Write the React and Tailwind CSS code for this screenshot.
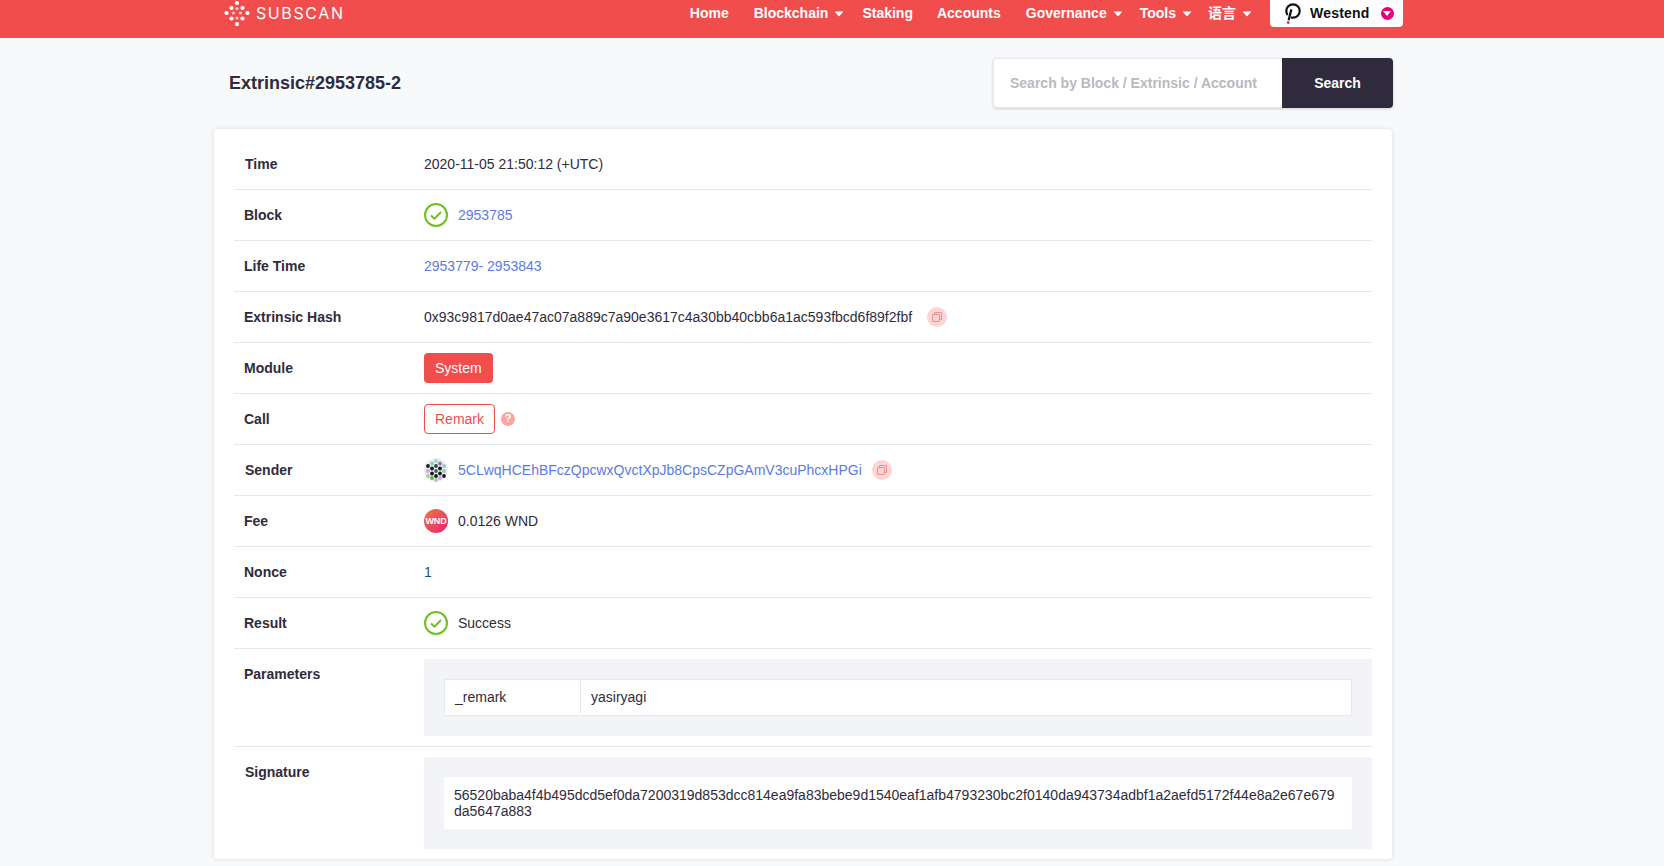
import React from "react";

const Caret = () => (
  <svg width="10" height="6" viewBox="0 0 10 6" className="ml-[6px] mt-px">
    <path d="M0.5 0.5h9L5 5.5z" fill="#fff" />
  </svg>
);

const Logo = () => {
  // diamond made of dots, rotated grid
  const dots = [
    [13, 3], [7.5, 8], [18.5, 8], [2.5, 13], [23.5, 13], [7.5, 18.5], [18.5, 18.5], [13, 24],
    [13, 8.5], [9.5, 13], [16.5, 13], [13, 18],
  ];
  return (
    <svg width="26" height="26" viewBox="0 0 26 26">
      {dots.map(([x, y], i) => (
        <circle key={i} cx={x} cy={y} r={i > 7 ? 1.6 : 2.1} fill="#fff" fillOpacity={i > 7 ? 0.7 : 1} />
      ))}
    </svg>
  );
};

const CheckIcon = () => (
  <svg width="24" height="24" viewBox="0 0 24 24" className="mr-[10px] shrink-0">
    <circle cx="12" cy="12" r="11" fill="none" stroke="#6fbf1f" strokeWidth="2" />
    <path d="M7 12.5l3.5 3.2L17 9" fill="none" stroke="#6fbf1f" strokeWidth="2" />
  </svg>
);

const CopyIcon = ({ className = "ml-[14px]" }) => (
  <span className={`flex h-5 w-5 items-center justify-center rounded-full bg-[#fdd5d5] ${className}`}>
    <svg width="10" height="10" viewBox="0 0 10 10" fill="none" stroke="#f08f8f" strokeWidth="1">
      <rect x="0.5" y="2.5" width="7" height="7" rx="0.5" />
      <path d="M2.5 2.5v-2h7v7h-2" />
    </svg>
  </span>
);

const Identicon = () => {
  const cells = [
    [12, 3, "#a8d5c5"],
    [8, 5.5, "#8fc9c4"], [16, 5.5, "#9b6fb5"],
    [4, 8, "#1f1d18"], [12, 8, "#1f4f45"], [20, 8, "#8fc9c4"],
    [8, 10.5, "#1a201c"], [16, 10.5, "#1a1a1a"],
    [4, 13, "#c9a8d8"], [12, 13, "#2f6b5e"], [20, 13, "#8fc9c4"],
    [8, 15.5, "#1a1a16"], [16, 15.5, "#1a201c"],
    [4, 18, "#a5d3a0"], [12, 18, "#1a1a1a"], [20, 18, "#1f1d18"],
    [8, 20, "#6aa84f"], [16, 20, "#c9a8d8"],
    [12, 22, "#a5d3a0"],
  ];
  return (
    <svg width="24" height="24" viewBox="0 0 24 24" className="mr-[10px] shrink-0">
      <circle cx="12" cy="12" r="12" fill="#eeeeee" />
      {cells.map(([x, y, c], i) => (
        <circle key={i} cx={x} cy={y} r="1.9" fill={c} />
      ))}
    </svg>
  );
};

const Row = ({ label, children, labelClass = "" }) => (
  <div className="flex h-[51px] items-center border-b border-[#e7e7f0]">
    <div className={`w-[190px] shrink-0 pl-[10px] text-sm font-bold text-[#302b3c] ${labelClass}`}>{label}</div>
    <div className="flex items-center text-sm text-[#302b3c]">{children}</div>
  </div>
);

const NavItem = ({ children, caret, className = "" }) => (
  <div className={`flex items-center text-sm font-bold text-white ${className}`}>
    {children}
    {caret && <Caret />}
  </div>
);

export default function App() {
  return (
    <div className="min-h-screen bg-[#f8f9fb] font-['Liberation_Sans','Noto_Sans_CJK_SC',sans-serif] text-[#302b3c]">
      {/* ===== Nav ===== */}
      <div className="flex h-[38px] items-start bg-[#f24d4d] pl-[224px]">
        <div className="flex h-[26px] items-center">
          <Logo />
          <span className="ml-[6px] font-['Inter',sans-serif] text-base font-normal tracking-[1.6px] text-white">SUBSCAN</span>
        </div>
        <div className="ml-auto flex h-[26px] items-center pr-[261px]">
          <NavItem>Home</NavItem>
          <NavItem caret className="ml-[25px]">Blockchain</NavItem>
          <NavItem className="ml-[18px]">Staking</NavItem>
          <NavItem className="ml-[24px]">Accounts</NavItem>
          <NavItem caret className="ml-[25px]">Governance</NavItem>
          <NavItem caret className="ml-[17px]">Tools</NavItem>
          <NavItem caret className="ml-[16px]">语言</NavItem>
          <div className="ml-[18px] flex h-[27px] w-[133px] items-center rounded-b-sm bg-white pl-[15px]">
            <svg width="16" height="21" viewBox="0 0 16 21" fill="none">
              <path d="M2.6 12.2C1.8 11 1.3 9.6 1.3 8 1.3 4.4 4.2 1.3 8 1.3s6.7 3 6.7 6.7-3 6.7-6.7 6.7c-.7 0-1.4-.1-2-.3" stroke="#111" strokeWidth="2.2" />
              <path d="M6.4 6.4L3.6 17.2" stroke="#111" strokeWidth="2.2" />
              <circle cx="3.2" cy="19.6" r="1.3" fill="#e6007a" />
            </svg>
            <span className="ml-[9px] text-sm font-bold tracking-[0.2px] text-[#111]">Westend</span>
            <span className="ml-[11px] flex h-[13px] w-[13px] items-center justify-center rounded-full bg-[#e6007a]">
              <svg width="8" height="5" viewBox="0 0 8 5">
                <path d="M0 0h8L4 5z" fill="#fff" />
              </svg>
            </span>
          </div>
        </div>
      </div>

      <div className="ml-[214px] w-[1178px]">
        {/* ===== Heading ===== */}
        <div className="mb-[2px] flex h-[89px] items-center justify-between pl-[15px]">
          <h1 className="text-lg font-bold text-[#302b3c]">Extrinsic#2953785-2</h1>
          <div className="-mr-px flex h-[50px] w-[400px] rounded shadow-[0_1px_3px_rgba(48,43,60,0.2)]">
            <div className="flex flex-1 items-center rounded-l border border-r-0 border-[#e7e7f0] bg-white pl-[16px] text-sm font-bold text-[#b9b9bf]">
              Search by Block / Extrinsic / Account
            </div>
            <div className="flex w-[111px] items-center justify-center rounded-r bg-[#302b3c] text-sm font-bold text-white">
              Search
            </div>
          </div>
        </div>

        {/* ===== Card ===== */}
        <div className="rounded bg-white px-5 pt-[10px] pb-[10px] shadow-[0_0_4px_rgba(48,43,60,0.15)]">
          <Row label="Time" labelClass="pl-[11px]">2020-11-05 21:50:12 (+UTC)</Row>
          <Row label="Block">
            <CheckIcon />
            <span className="text-[#5b7be8]">2953785</span>
          </Row>
          <Row label="Life Time">
            <span className="text-[#5b7be8]">2953779- 2953843</span>
          </Row>
          <Row label="Extrinsic Hash">
            0x93c9817d0ae47ac07a889c7a90e3617c4a30bb40cbb6a1ac593fbcd6f89f2fbf
            <CopyIcon className="ml-[15px]" />
          </Row>
          <Row label="Module">
            <span className="flex h-[30px] items-center rounded bg-[#f24d4d] px-[11px] text-white">System</span>
          </Row>
          <Row label="Call">
            <span className="flex h-[30px] items-center rounded border border-[#f24d4d] px-[10px] text-[#f24d4d]">Remark</span>
            <span className="ml-[6px] flex h-[14px] w-[14px] items-center justify-center rounded-full bg-[#f9a6a6] text-[11px] font-bold text-white">?</span>
          </Row>
          <Row label="Sender" labelClass="pl-[11px]">
            <Identicon />
            <span className="text-[#5b7be8]">5CLwqHCEhBFczQpcwxQvctXpJb8CpsCZpGAmV3cuPhcxHPGi</span>
            <CopyIcon className="ml-[10px]" />
          </Row>
          <Row label="Fee">
            <span className="mr-[10px] flex h-6 w-6 items-center justify-center rounded-full bg-gradient-to-br from-[#f5703f] to-[#e6126e] text-[9px] font-bold tracking-[-0.2px] text-white">WND</span>
            0.0126 WND
          </Row>
          <Row label="Nonce">
            <span className="text-[#1f4f86]">1</span>
          </Row>
          <Row label="Result">
            <CheckIcon />
            Success
          </Row>

          <div className="flex h-[98px] border-b border-[#e7e7f0] pt-[10px]">
            <div className="w-[190px] shrink-0 pl-[10px] pt-[5px] text-sm font-bold">Parameters</div>
            <div className="h-[77px] flex-1 bg-[#f3f4f8] px-5 pt-5">
              <div className="flex h-[37px] items-center border border-[#e7e7f0] bg-white pb-px text-sm">
                <div className="flex h-full w-[136px] items-center border-r border-[#e7e7f0] pl-[10px]">_remark</div>
                <div className="pl-[10px]">yasiryagi</div>
              </div>
            </div>
          </div>

          <div className="flex pt-[10px]">
            <div className="w-[190px] shrink-0 pl-[11px] pt-[5px] text-sm font-bold">Signature</div>
            <div className="h-[92px] flex-1 bg-[#f3f4f8] px-5 pt-5">
              <div className="h-[52px] break-all bg-white px-[10px] py-[10px] text-sm leading-4">
                56520baba4f4b495dcd5ef0da7200319d853dcc814ea9fa83bebe9d1540eaf1afb4793230bc2f0140da943734adbf1a2aefd5172f44e8a2e67e679da5647a883
              </div>
            </div>
          </div>
        </div>
      </div>
    </div>
  );
}
